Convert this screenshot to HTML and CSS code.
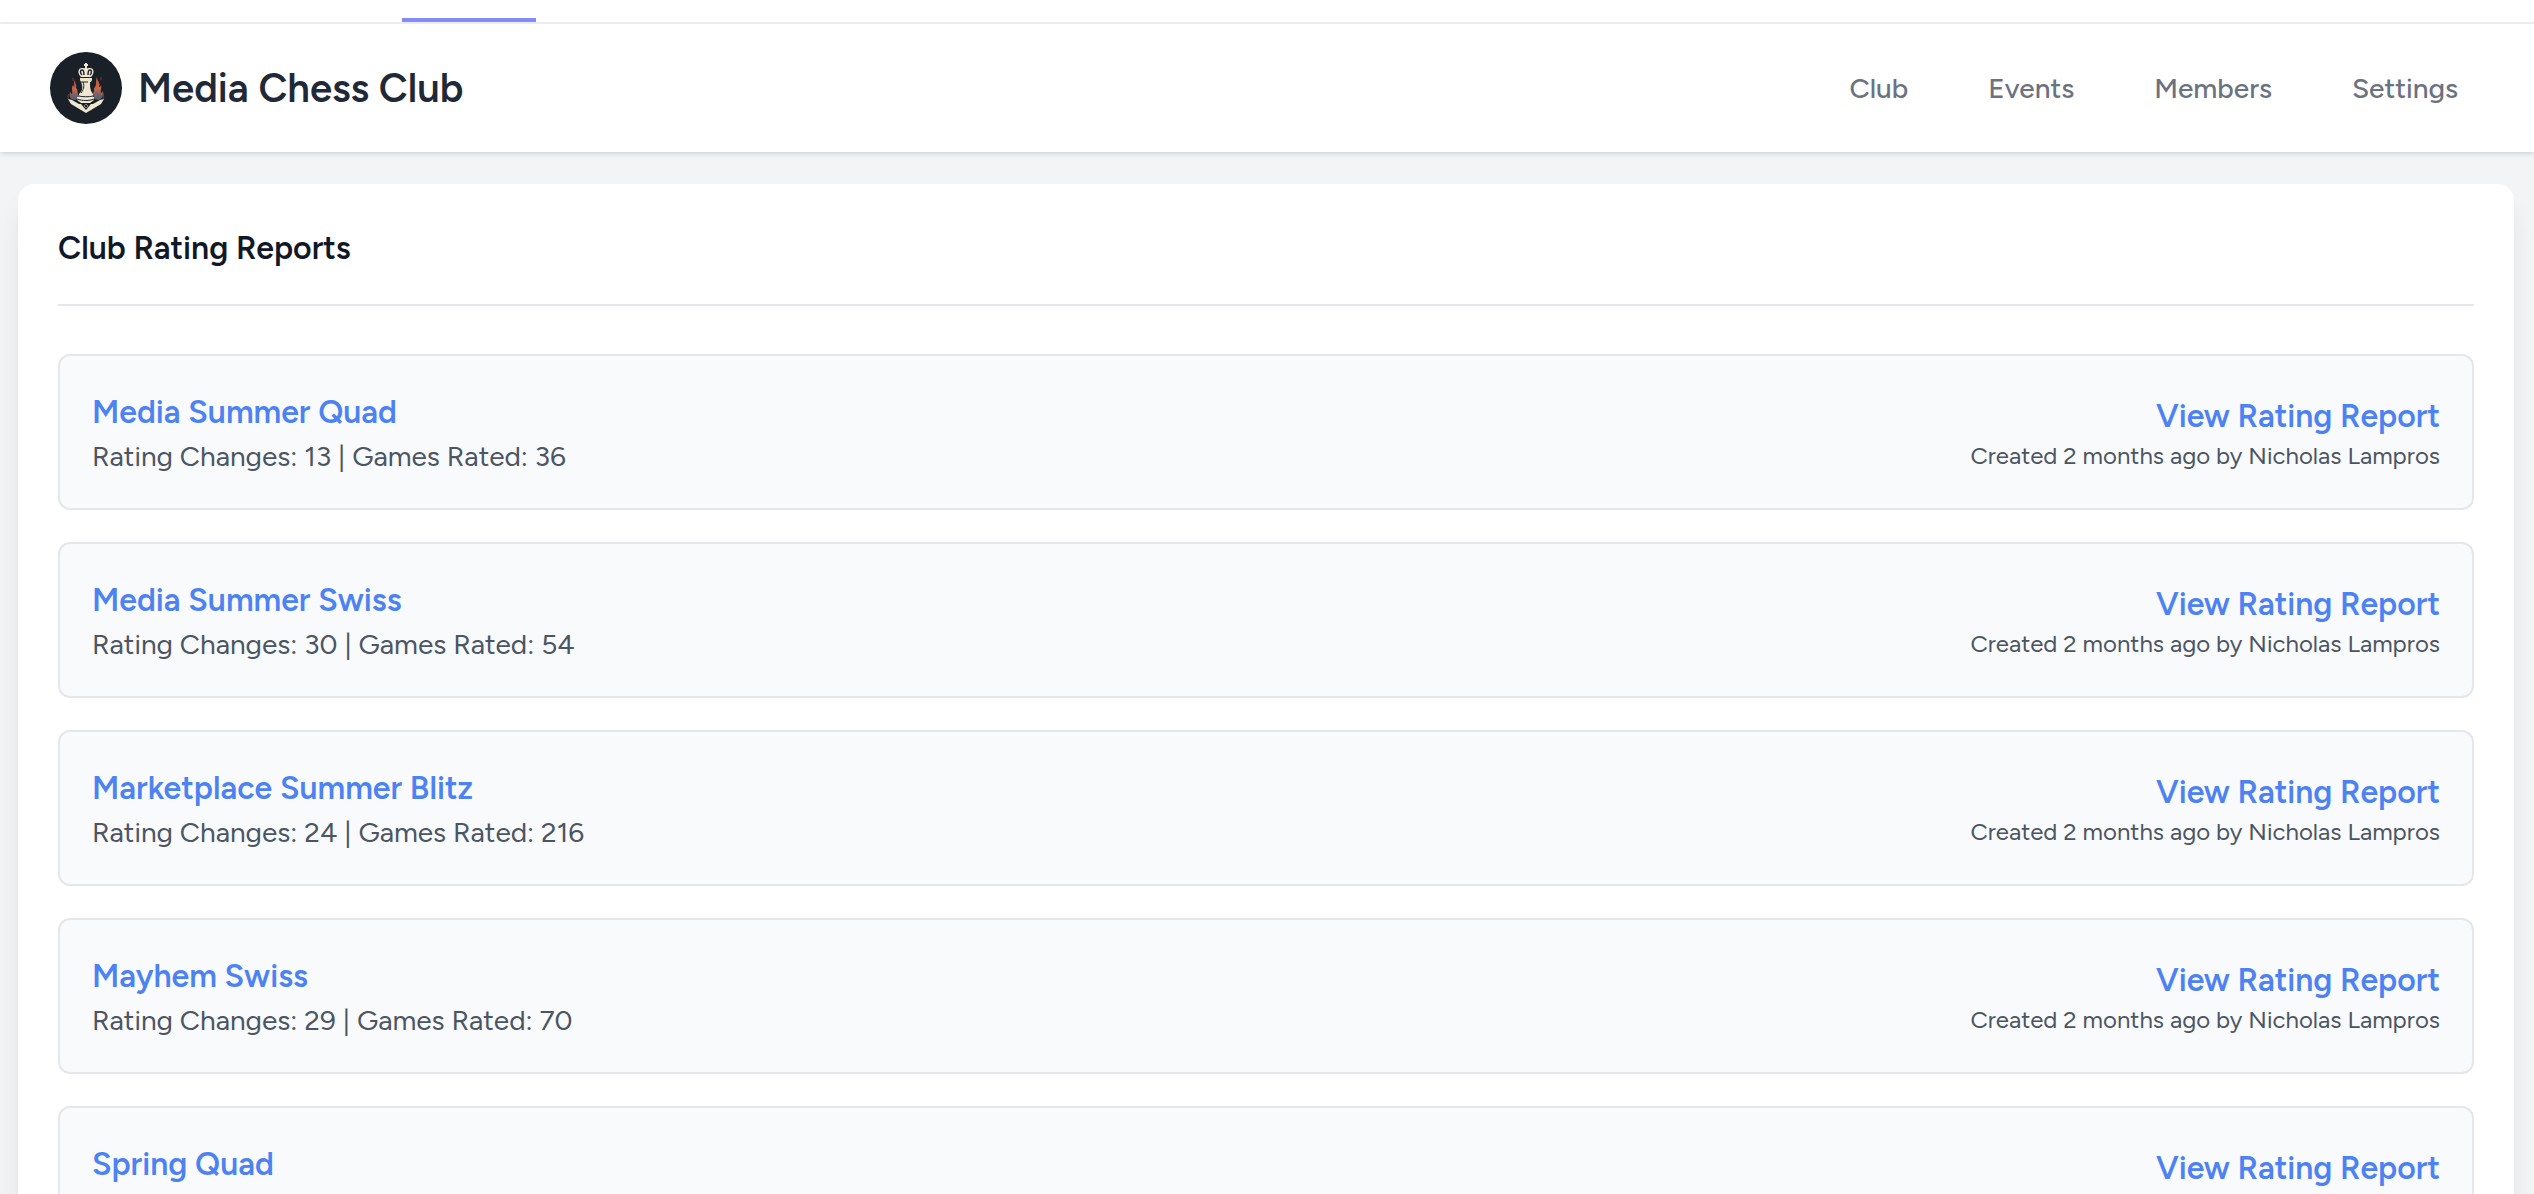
FILE: index.html
```
<!DOCTYPE html>
<html lang="en">

<head>
    <meta charset="UTF-8">
    <meta name="viewport" content="width=device-width, initial-scale=1.0">
    <title>Media Chess Club</title>
    <link rel="stylesheet" href="styles.css">
</head>

<body>
    <div class="page">
        <div class="topbar">
            <span class="active-tab"></span>
        </div>

        <header class="header">
            <div class="brand">
                <svg class="logo" viewBox="0 0 72 72" aria-hidden="true">
                    <defs>
                        <linearGradient id="flame" x1="0" y1="0" x2="0" y2="1">
                            <stop offset="0" stop-color="#b4523a" />
                            <stop offset="0.5" stop-color="#c9694b" />
                            <stop offset="0.75" stop-color="#7d6264" />
                            <stop offset="1" stop-color="#4b6076" />
                        </linearGradient>
                    </defs>
                    <circle cx="36" cy="36" r="36" fill="#1a2028" />
                    <!-- flames -->
                    <path fill="url(#flame)" d="M25 27c-1 3 2 5 1 9 2 1 1 5 3 8l0 3-5 1c-4-1-5-4-4-8 1 1 1 2 2 2 1-4-1-6 1-9 1 1 1 2 1 3 1-3-1-5 1-9z" />
                    <path fill="url(#flame)" d="M47 25c0 4 4 6 2 10 1 0 2-1 2-2 1 3-1 5 0 8 1 0 1-1 2-2 1 4-1 8-4 9l-5-1-1-6c2-2 0-4 2-6 2-3 0-6 2-10z" />
                    <path fill="none" stroke="#753c31" stroke-width="1" d="M19 42c-2 3-1 5 1 7M53 41c1 3 1 6-1 8M23 29v-3M51 28v-3" />
                    <!-- shield point -->
                    <path fill="#efe6d0" d="M18 47l4 1 7 4h14l7-4 4-1-3 5-15 9-15-9z" />
                    <path fill="#1a2028" d="M31 52h10l-5 6z" />
                    <path fill="none" stroke="#8f8b82" stroke-width="1" d="M36 52l2 2-2 2-2-2z" />
                    <!-- king -->
                    <path fill="#efe6d0" d="M35 11h2v1h1v2h-1v3h-2v-3h-1v-2h1z" />
                    <path fill="#efe6d0" d="M31 25c-4-4-3-9 1-9 2 0 3 0 4 1 1-1 2-1 4-1 4 0 5 5 1 9z" />
                    <path fill="none" stroke="#1a2028" stroke-width="1.4" d="M32 23c-2-2-2-5 0-5 1 0 2 2 2 5M40 23c2-2 2-5 0-5-1 0-2 2-2 5" />
                    <path fill="#efe6d0" d="M30 26h12v2l-1 2H31l-1-2z" />
                    <path fill="#efe6d0" d="M31 30h9c0 5 0 8 3 12l0 3H29v-3c4-4 4-7 2-12z" />
                    <path fill="#efe6d0" d="M27 45h17v3l-4 3h-9l-4-3z" />
                    <path fill="none" stroke="#1a2028" stroke-width="1" d="M33 30c2 5 0 8-2 11M31 30h7M29 44c3 1 10 1 14 0M27 47c6 2 12 2 17 0" />
                </svg>
                <span class="brand-name">Media Chess Club</span>
            </div>
            <nav class="menu">
                <a href="#">Club</a>
                <a href="#">Events</a>
                <a href="#">Members</a>
                <a href="#">Settings</a>
            </nav>
        </header>

        <main class="content">
            <section class="panel">
                <h2 class="panel-title">Club Rating Reports</h2>
                <div class="reports">
                    <div class="report">
                        <div class="left">
                            <a href="#" class="link">Media Summer Quad</a>
                            <p class="stats">Rating Changes: 13 | Games Rated: 36</p>
                        </div>
                        <div class="right">
                            <a href="#" class="link">View Rating Report</a>
                            <p class="created">Created 2 months ago by Nicholas Lampros</p>
                        </div>
                    </div>
                    <div class="report">
                        <div class="left">
                            <a href="#" class="link">Media Summer Swiss</a>
                            <p class="stats">Rating Changes: 30 | Games Rated: 54</p>
                        </div>
                        <div class="right">
                            <a href="#" class="link">View Rating Report</a>
                            <p class="created">Created 2 months ago by Nicholas Lampros</p>
                        </div>
                    </div>
                    <div class="report">
                        <div class="left">
                            <a href="#" class="link">Marketplace Summer Blitz</a>
                            <p class="stats">Rating Changes: 24 | Games Rated: 216</p>
                        </div>
                        <div class="right">
                            <a href="#" class="link">View Rating Report</a>
                            <p class="created">Created 2 months ago by Nicholas Lampros</p>
                        </div>
                    </div>
                    <div class="report">
                        <div class="left">
                            <a href="#" class="link">Mayhem Swiss</a>
                            <p class="stats">Rating Changes: 29 | Games Rated: 70</p>
                        </div>
                        <div class="right">
                            <a href="#" class="link">View Rating Report</a>
                            <p class="created">Created 2 months ago by Nicholas Lampros</p>
                        </div>
                    </div>
                    <div class="report">
                        <div class="left">
                            <a href="#" class="link">Spring Quad</a>
                            <p class="stats"></p>
                        </div>
                        <div class="right">
                            <a href="#" class="link">View Rating Report</a>
                            <p class="created"></p>
                        </div>
                    </div>
                </div>
            </section>
        </main>
    </div>
</body>

</html>
```
FILE: styles.css
```
* {
    box-sizing: border-box;
}

body {
    margin: 0;
    background-color: #f3f4f6;
    font-family: Figtree, Roboto, sans-serif;
}

a {
    text-decoration: none;
}

.page {
    height: 100vh;
    overflow: hidden;
}

/* bottom edge of the main navigation */
.topbar {
    display: flex;
    align-items: flex-end;
    height: 24px;
    padding-left: 402px;
    background-color: #ffffff;
    border-bottom: 2px solid #f0f0f1;
}

.active-tab {
    width: 134px;
    height: 4px;
    background-color: #818cf8;
}

.header {
    display: flex;
    justify-content: space-between;
    align-items: center;
    padding: 28px 52px 28px 50px;
    background-color: #ffffff;
    box-shadow: 0 2px 6px rgb(0 0 0 / 0.1), 0 2px 4px -2px rgb(0 0 0 / 0.1);
}

.brand {
    display: flex;
    align-items: center;
    gap: 16px;
}

.logo {
    width: 72px;
    height: 72px;
}

.brand-name {
    font-size: 40px;
    line-height: 48px;
    font-weight: 600;
    color: #1f2937;
}

.menu {
    display: flex;
    gap: 32px;
}

.menu a {
    padding: 0 24px;
    font-size: 28px;
    line-height: 40px;
    font-weight: 500;
    color: #6b7280;
}

.content {
    padding: 32px 20px 32px 18px;
}

.panel {
    padding: 40px;
    background-color: #ffffff;
    border-radius: 16px;
    box-shadow: 0 20px 30px -6px rgb(0 0 0 / 0.1), 0 8px 12px -8px rgb(0 0 0 / 0.1);
}

.panel-title {
    margin: 0 0 48px;
    padding-bottom: 32px;
    border-bottom: 2px solid #e5e7eb;
    font-size: 32px;
    line-height: 48px;
    font-weight: 600;
    color: #111827;
}

.reports {
    display: flex;
    flex-direction: column;
    gap: 32px;
}

.report {
    display: flex;
    justify-content: space-between;
    align-items: center;
    padding: 32px;
    background-color: #f9fafb;
    border: 2px solid #e5e7eb;
    border-radius: 12px;
}

.right {
    text-align: right;
}

.link {
    display: block;
    font-size: 32px;
    line-height: 48px;
    font-weight: 600;
    color: #4d82f3;
}

.stats {
    min-height: 40px;
    margin: 0;
    font-size: 28px;
    line-height: 40px;
    color: #4b5563;
}

.created {
    min-height: 32px;
    margin: 0;
    font-size: 24px;
    line-height: 32px;
    color: #4b5563;
}
```
